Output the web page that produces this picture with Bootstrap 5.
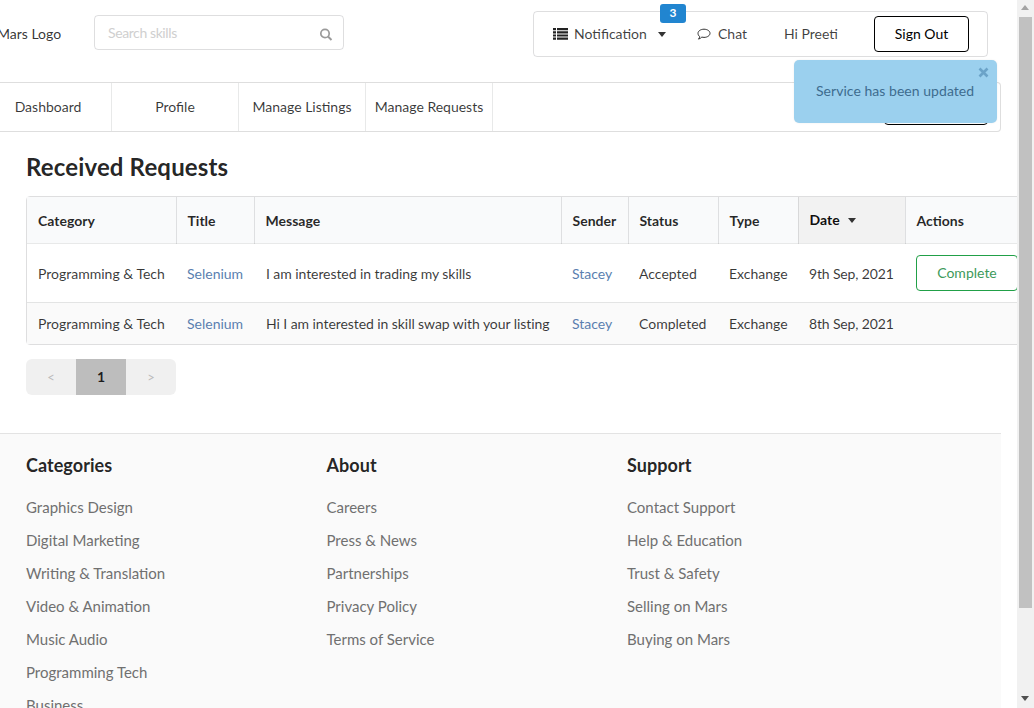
<!DOCTYPE html>
<html lang="en">
<head>
    <meta charset="UTF-8" />
    <meta name="viewport" content="width=device-width, initial-scale=1.0"/>
    <title>Manage Requests</title>
    <link href="https://cdn.jsdelivr.net/npm/bootstrap@5.3.1/dist/css/bootstrap.min.css" rel="stylesheet">
    <style>
        html, body { height: 708px; overflow: hidden; }
        body { font-family: Lato, "Open Sans", sans-serif; font-size: 14px; color: rgba(0,0,0,.8); line-height: 20px; }
        a { text-decoration: none; }
        .view-port { width: 1017px; height: 708px; overflow: hidden; position: relative; }
        .page-shift { margin-left: -16px; width: 1017px; }

        /* top bar */
        .top-bar { height: 82px; padding: 11px 13px 0 15px; }
        .logo-text { width: 97px; margin-left: -2px; padding-top: 13px; }
        .search-box { width: 250px; height: 35px; margin-top: 4px; border: 1px solid rgba(34,36,38,.15); border-radius: 4px; padding: 0 10px 0 13px; color: #cfcfcf; }
        .search-text { padding-top: 7px; letter-spacing: -.4px; }
        .search-box svg { margin-top: 6px; }
        .user-menu { width: 455px; height: 46px; border: 1px solid rgba(34,36,38,.15); border-radius: 4px; position: relative; color: rgba(0,0,0,.75); }
        .menu-notif { margin-left: 19px; width: 144px; }
        .menu-notif svg { margin-right: 6px; }
        .caret-down { display: inline-block; border: 4px solid transparent; border-top: 5px solid #333; border-bottom: 0; margin-left: 11px; }
        .menu-chat { width: 87px; }
        .menu-chat svg { margin-right: 7px; }
        .menu-hi { width: 90px; }
        .signout-btn { width: 95px; height: 36px; padding: 0; font-size: 14px; line-height: 34px; color: #000; border: 1px solid #000; border-radius: 4px; background: #fff; }
        .notif-count { position: absolute; top: -8px; left: 126px; width: 26px; height: 19px; background: #2185d0; color: #fff; font-size: 12px; font-weight: 700; text-align: center; line-height: 18px; border-radius: 3px; }

        /* tabs */
        .tab-bar { height: 50px; padding-left: 1px; border: 1px solid rgba(34,36,38,.15); border-left: 0; border-radius: 0 4px 4px 0; position: relative; }
        .tab-link { width: 127px; height: 48px; line-height: 48px; text-align: center; color: rgba(0,0,0,.78); border-right: 1px solid rgba(34,36,38,.1); white-space: nowrap; }
        .hidden-btn { position: absolute; right: 12px; bottom: 6px; width: 104px; height: 30px; border: 1px solid #000; border-radius: 4px; }

        /* toast */
        .toast-msg { position: absolute; left: 794px; top: 60px; width: 203px; height: 63px; background: #9bd0ee; border-radius: 5px; color: #3e6c8f; z-index: 5; font-size: 14px; padding: 21px 0 0 22px; letter-spacing: .04px; box-shadow: 0 0 2px rgba(0,0,0,.08); }
        .toast-x { position: absolute; right: 8px; top: 7px; }

        /* requests */
        .content-area { padding: 16px 0 0 42px; height: 301px; }
        .page-title { font-size: 24px; font-weight: 700; line-height: 38px; margin: 0 0 10px; letter-spacing: .15px; color: rgba(0,0,0,.87); }
        .req-wrap { width: 1010px; border: 1px solid rgba(34,36,38,.15); border-radius: 4px; }
        .req-table { table-layout: fixed; width: 1008px; margin: 0; font-size: 14px; }
        .req-table th, .req-table td { padding: 2px 11px 0; vertical-align: middle; white-space: nowrap; color: rgba(0,0,0,.78); background: transparent; box-shadow: none; }
        .req-table thead th { height: 46px; background: #f9fafb; font-weight: 700; color: rgba(0,0,0,.85); border-bottom: 1px solid rgba(34,36,38,.1); border-right: 1px solid rgba(34,36,38,.12); }
        .req-table thead th.sort-col { padding-top: 0; background: #f2f2f2; color: rgba(0,0,0,.95); }
        .req-table tbody tr:first-child td { height: 59px; border-bottom: 1px solid rgba(34,36,38,.1); }
        .req-table tbody tr:last-child td { height: 42px; background: #fafafa; border-bottom: 0; }
        .req-table a { color: #5a7fb0; }
        .req-table .msg-cell { padding-left: 12px; letter-spacing: -.07px; }
        .req-table .date-cell { letter-spacing: -.15px; }
        .req-table .act-cell { padding-top: 0; }
        .sort-caret { display: inline-block; border: 4px solid transparent; border-top: 5px solid #333; border-bottom: 0; margin-left: 5px; vertical-align: 2px; }
        .complete-btn { width: 102px; height: 36px; padding: 0; font-size: 14px; color: #3d9a5b; border: 1px solid #21a047; border-radius: 4px; background: #fff; }
        .pager-list { margin: 14px 0 0; }
        .pager-list .page-item .page-link { width: 50px; height: 36px; margin-left: 0; padding: 0; line-height: 36px; text-align: center; border: 0; background: #f0f0f0; color: #bbb; font-size: 13px; }
        .pager-list .page-item.active .page-link { background: #bdbdbd; color: rgba(0,0,0,.85); font-size: 14px; font-weight: 700; }

        /* footer */
        .site-footer { border-top: 1px solid #e3e3e3; background: #fafafa; padding: 19px 0 0 42px; height: 300px; }
        .foot-col { width: 300.5px; }
        .foot-head { font-size: 18px; font-weight: 700; line-height: 24px; margin: 0 0 14px; letter-spacing: .05px; color: rgba(0,0,0,.87); }
        .foot-link { display: block; color: #707070; font-size: 15px; line-height: 33px; }

        /* browser scrollbar */
        .fake-scroll { width: 17px; height: 708px; background: #f1f1f1; padding: 0 2px; }
        .scroll-thumb { height: 591px; margin-top: 17px; background: #c1c1c1; }
        .scroll-up, .scroll-down { position: absolute; left: 1021px; width: 0; border: 4.5px solid transparent; }
        .scroll-up { top: 5px; border-bottom: 5px solid #a3a3a3; border-top: 0; }
        .scroll-down { top: 696px; border-top: 5px solid #505050; border-bottom: 0; }
    </style>
</head>
<body>
<div class="d-flex">
    <div class="view-port">
        <div class="page-shift">
            <header class="top-bar d-flex">
                <div class="logo-text">Mars Logo</div>
                <div class="search-box d-flex justify-content-between">
                    <span class="search-text">Search skills</span>
                    <svg width="14" height="22" viewBox="0 0 14 22"><circle cx="6" cy="11.5" r="4.2" fill="none" stroke="#9a9a9a" stroke-width="1.7"/><path d="M9 14.5l3.500 3.500" stroke="#9a9a9a" stroke-width="2"/></svg>
                </div>
                <div class="user-menu d-flex align-items-center ms-auto">
                    <div class="menu-notif d-flex align-items-center">
                        <svg width="15" height="12" viewBox="0 0 15 12" fill="#222"><path d="M0 0h3v2.200H0zM4 0h11v2.200H4zM0 3.200h3v2.200H0zM4 3.200h11v2.200H4zM0 6.400h3v2.200H0zM4 6.400h11v2.200H4zM0 9.600h3v2.200H0zM4 9.600h11v2.200H4z"/></svg>
                        <span>Notification</span><span class="caret-down"></span>
                    </div>
                    <div class="menu-chat d-flex align-items-center">
                        <svg width="14" height="13" viewBox="0 0 14 13"><path d="M7 1.200c3.300 0 6 1.800 6 4.100S10.300 9.400 7 9.400c-.8 0-1.500-.1-2.200-.3-.8.900-2 1.700-3.300 2 .7-.8 1.100-1.600 1.200-2.500C1.700 7.900 1 6.700 1 5.300 1 3 3.700 1.200 7 1.200z" fill="none" stroke="#333" stroke-width="1"/></svg>
                        <span>Chat</span>
                    </div>
                    <div class="menu-hi">Hi Preeti</div>
                    <button type="button" class="btn signout-btn">Sign Out</button>
                    <span class="notif-count">3</span>
                </div>
            </header>
            <nav class="tab-bar d-flex">
                <a class="tab-link" href="#">Dashboard</a>
                <a class="tab-link" href="#">Profile</a>
                <a class="tab-link" href="#">Manage Listings</a>
                <a class="tab-link" href="#">Manage Requests</a>
                <span class="hidden-btn"></span>
            </nav>
            <section class="content-area">
                <h1 class="page-title">Received Requests</h1>
                <div class="req-wrap">
                    <table class="table req-table">
                        <colgroup>
                            <col style="width:149px"><col style="width:78px"><col style="width:307px"><col style="width:67px"><col style="width:90px"><col style="width:80px"><col style="width:107px"><col>
                        </colgroup>
                        <thead>
                            <tr>
                                <th>Category</th><th>Title</th><th>Message</th><th>Sender</th><th>Status</th><th>Type</th>
                                <th class="sort-col">Date <span class="sort-caret"></span></th><th>Actions</th>
                            </tr>
                        </thead>
                        <tbody>
                            <tr>
                                <td>Programming &amp; Tech</td><td><a href="#">Selenium</a></td><td class="msg-cell">I am interested in trading my skills</td><td><a href="#">Stacey</a></td><td>Accepted</td><td>Exchange</td><td class="date-cell">9th Sep, 2021</td>
                                <td class="act-cell"><button type="button" class="btn complete-btn">Complete</button></td>
                            </tr>
                            <tr>
                                <td>Programming &amp; Tech</td><td><a href="#">Selenium</a></td><td class="msg-cell">Hi I am interested in skill swap with your listing</td><td><a href="#">Stacey</a></td><td>Completed</td><td>Exchange</td><td class="date-cell">8th Sep, 2021</td><td></td>
                            </tr>
                        </tbody>
                    </table>
                </div>
                <ul class="pagination pager-list">
                    <li class="page-item"><a class="page-link" href="#">&lt;</a></li>
                    <li class="page-item active"><a class="page-link" href="#">1</a></li>
                    <li class="page-item"><a class="page-link" href="#">&gt;</a></li>
                </ul>
            </section>
            <footer class="site-footer d-flex">
                <div class="foot-col">
                    <h4 class="foot-head">Categories</h4>
                    <a class="foot-link" href="#">Graphics Design</a>
                    <a class="foot-link" href="#">Digital Marketing</a>
                    <a class="foot-link" href="#">Writing &amp; Translation</a>
                    <a class="foot-link" href="#">Video &amp; Animation</a>
                    <a class="foot-link" href="#">Music Audio</a>
                    <a class="foot-link" href="#">Programming Tech</a>
                    <a class="foot-link" href="#">Business</a>
                </div>
                <div class="foot-col">
                    <h4 class="foot-head">About</h4>
                    <a class="foot-link" href="#">Careers</a>
                    <a class="foot-link" href="#">Press &amp; News</a>
                    <a class="foot-link" href="#">Partnerships</a>
                    <a class="foot-link" href="#">Privacy Policy</a>
                    <a class="foot-link" href="#">Terms of Service</a>
                </div>
                <div class="foot-col">
                    <h4 class="foot-head">Support</h4>
                    <a class="foot-link" href="#">Contact Support</a>
                    <a class="foot-link" href="#">Help &amp; Education</a>
                    <a class="foot-link" href="#">Trust &amp; Safety</a>
                    <a class="foot-link" href="#">Selling on Mars</a>
                    <a class="foot-link" href="#">Buying on Mars</a>
                </div>
            </footer>
        </div>
        <div class="toast-msg">
            Service has been updated
            <svg class="toast-x" width="11" height="11" viewBox="0 0 11 11"><path d="M1.500 1.500l8 8M9.500 1.500l-8 8" stroke="#6ba3c8" stroke-width="2.600"/></svg>
        </div>
    </div>
    <div class="fake-scroll"><div class="scroll-thumb"></div></div>
    <span class="scroll-up"></span><span class="scroll-down"></span>
</div>
<script src="https://cdn.jsdelivr.net/npm/bootstrap@5.3.1/dist/js/bootstrap.bundle.min.js"></script>
</body>
</html>
